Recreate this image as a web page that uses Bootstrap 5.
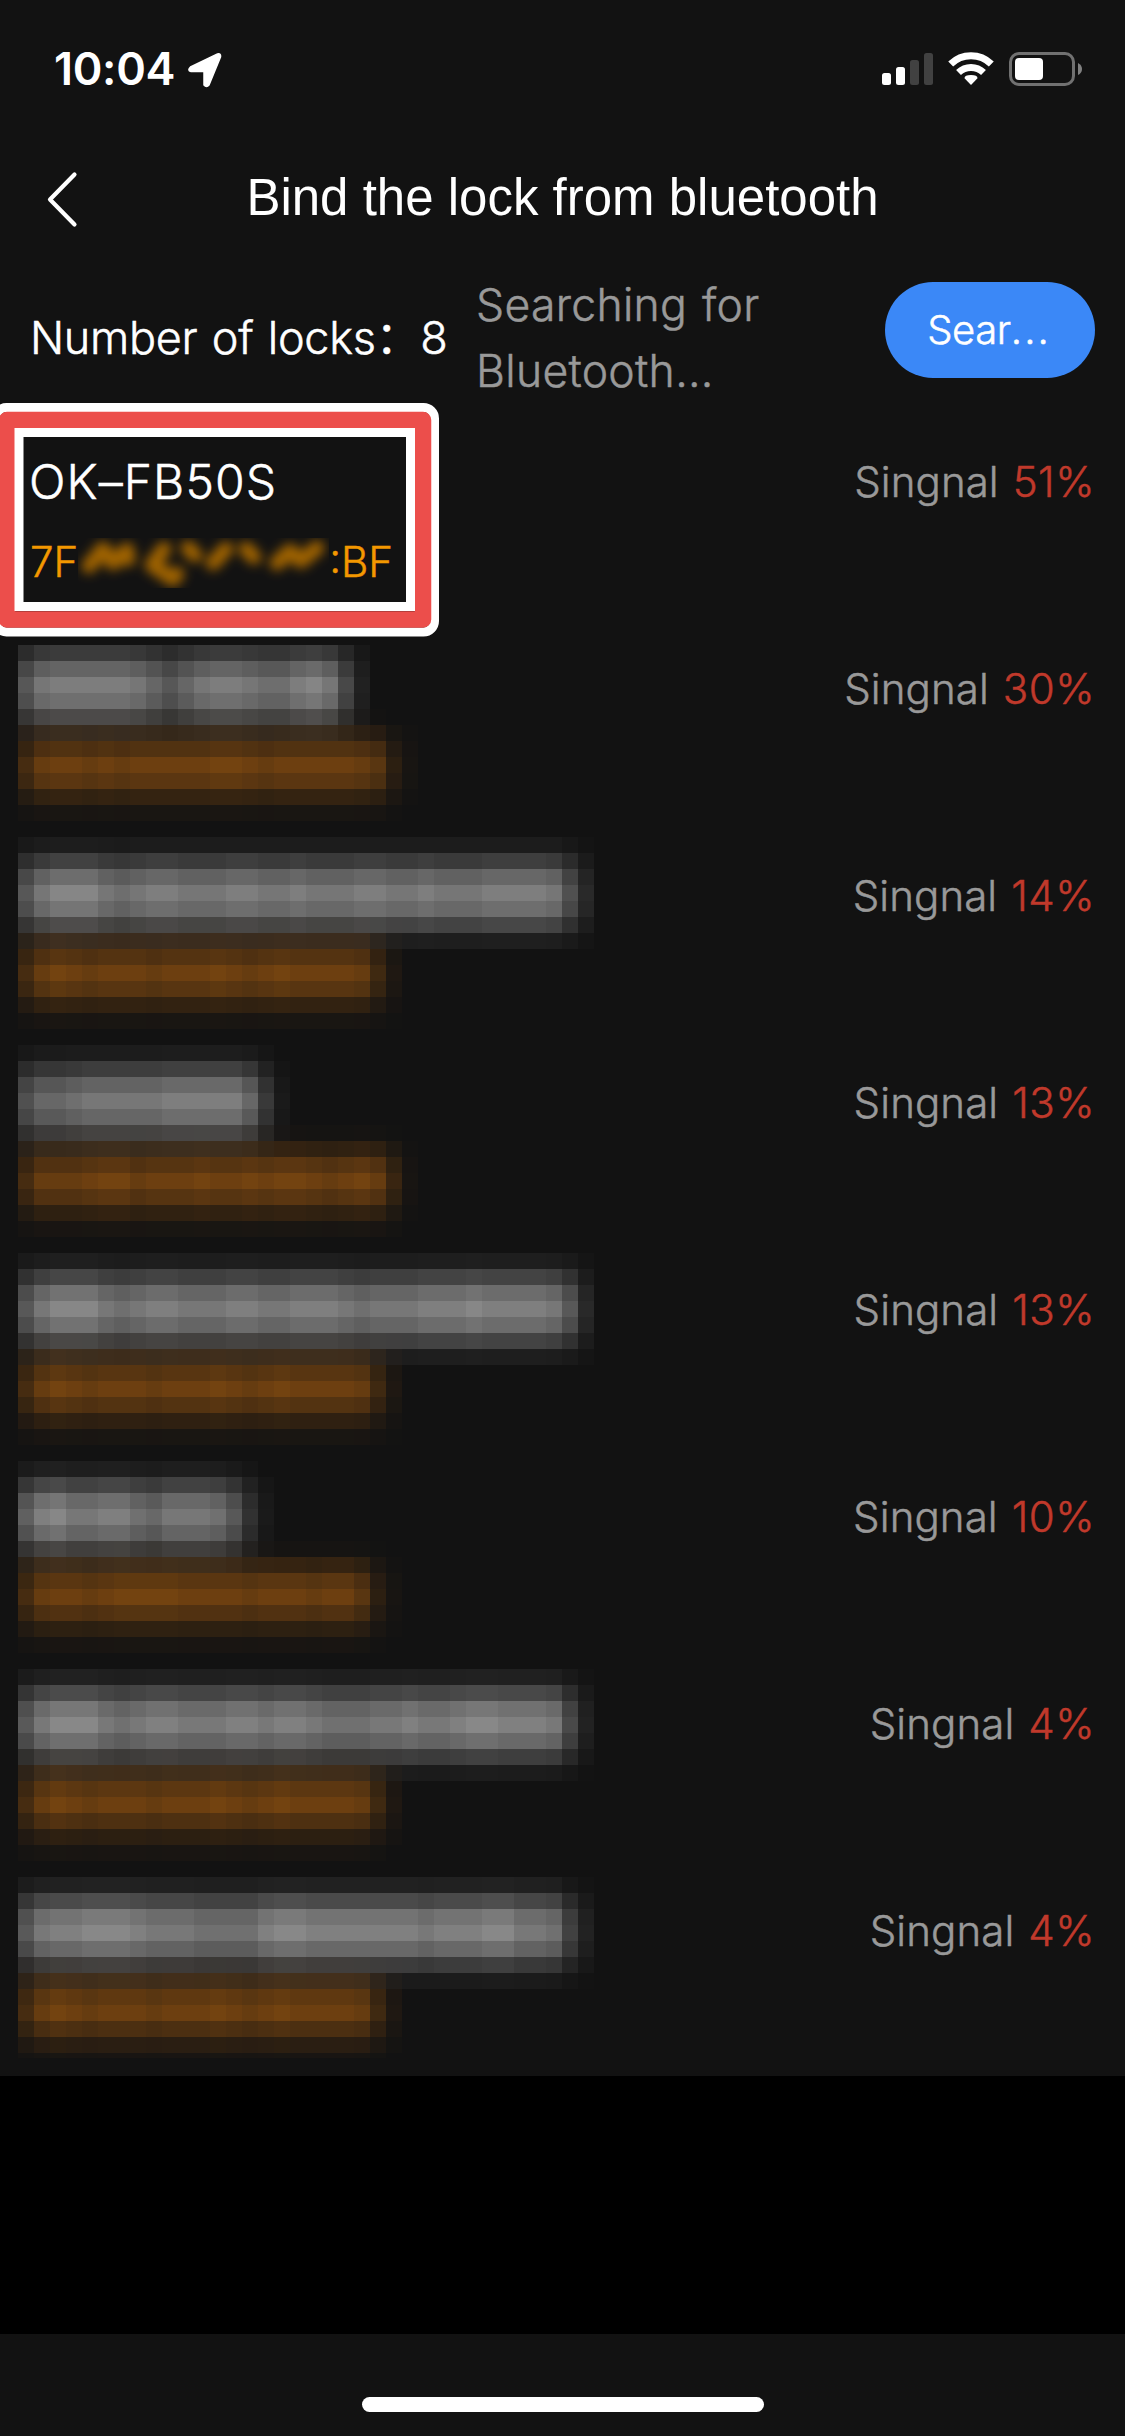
<!DOCTYPE html>
<html lang="en">
<head>
<meta charset="utf-8">
<meta name="viewport" content="width=device-width, initial-scale=1">
<title>Bind the lock from bluetooth</title>
<link href="https://cdn.jsdelivr.net/npm/bootstrap@5.3.0/dist/css/bootstrap.min.css" rel="stylesheet">
<style>
body{background:#121212;color:#fff;font-family:Inter,"Noto Sans CJK SC",sans-serif;font-weight:350;width:1125px;overflow-x:hidden}
.status{height:132px;padding:52px 43px 0 54px}
.clock{font-size:45px;font-weight:600;line-height:34px;letter-spacing:-.3px}
.loc-arrow{margin-left:13px}
.nav-head{height:132px;padding-left:44px}
.nav-title{font:400 51px/132px "Liberation Sans",sans-serif}
.search-row{height:156px;padding:0 30px}
.search-row,.lock-item{-webkit-text-stroke:.5px currentColor}
.lock-count{font-size:45px;line-height:60px;padding-top:44px;width:446px;white-space:nowrap;letter-spacing:-.3px;word-spacing:2px}
.hint{font-size:44.5px;line-height:66px;color:#999;padding-top:8px;width:409px;letter-spacing:.3px;word-spacing:2px}
.search-btn{width:210px;height:96px;border-radius:48px;background:#3b88f7;color:#fff;font-size:40px;font-weight:350;margin-top:18px;padding:0 2px 0 0;line-height:90px;border:0;letter-spacing:-.4px}
.dots{letter-spacing:2px}
.lock-item{height:207px;padding:32px 30px 0}
.lock-name{font-size:48px;line-height:60px;letter-spacing:1.1px;margin-left:-1px}
.lock-mac{font-size:42px;line-height:50px;color:#f39800;margin-top:24px}
.signal-info{font-size:42px;line-height:60px;color:#999;letter-spacing:.1px;word-spacing:2px}
.signal-info b{color:#c0392b;font-weight:350;letter-spacing:.5px}
.marker{left:-9px;top:403px;width:448px;height:233.5px;z-index:3}
.redact{left:18px;top:645px;z-index:2}
.empty-area{height:258px;background:#000}
.home-zone{height:102px;padding-top:63px}
.home-bar{width:402px;height:15px;border-radius:8px;background:#fff}
</style>
</head>
<body>
<div class="position-relative">
<header class="status d-flex justify-content-between align-items-start">
  <div class="d-flex">
    <span class="clock">10:04</span>
    <svg class="loc-arrow" width="34" height="36" viewBox="0 0 34 36"><path d="M2.500 15 29.500 2Q33 1 32.500 5L21 33Q18.500 36 16 33V19.500H3Q-1 18.500 2.500 15Z" fill="#fff" stroke="#fff" stroke-width="1.500" stroke-linejoin="round"/></svg>
  </div>
  <svg width="201" height="36" viewBox="0 0 201 36">
    <g fill="#fff"><rect x="1" y="21" width="9" height="12" rx="2.500"/><rect x="15" y="15" width="9" height="18" rx="2.500"/></g>
    <g fill="#414141"><rect x="29" y="8" width="9" height="25" rx="2.500"/><rect x="43" y="1" width="9" height="32" rx="2.500"/></g>
    <g fill="none" stroke="#fff" stroke-width="7"><path d="M69.700 12A29 29 0 0 1 110.300 12"/><path d="M77.500 20.500A18 18 0 0 1 102.500 20.500"/></g>
    <path d="M90 33 83.500 26.300Q83.500 23 90 23T96.500 26.300Z" fill="#fff"/>
    <rect x="129.500" y="1.500" width="63" height="31" rx="8.500" fill="none" stroke="#717171" stroke-width="3"/>
    <rect x="134" y="6" width="28" height="22" rx="4" fill="#fff"/>
    <path d="M197 11Q201 13 201 17T197 23Z" fill="#818181"/>
  </svg>
</header>
<nav class="nav-head d-flex align-items-center position-relative">
  <svg width="36" height="60" viewBox="0 0 36 60"><path d="M30.500 6.500 6 31.500 30.500 56.500" fill="none" stroke="#fff" stroke-width="4.200" stroke-linecap="round" stroke-linejoin="round"/></svg>
  <div class="position-absolute start-0 w-100 text-center"><span class="nav-title">Bind the lock from bluetooth</span></div>
</nav>
<section class="search-row d-flex">
  <div class="lock-count">Number of locks：8</div>
  <div class="hint">Searching for<br>Bluetooth...</div>
  <button class="search-btn btn" type="button">Sear<span class="dots">...</span></button>
</section>
<main id="locks">
  <article class="lock-item d-flex justify-content-between">
    <div><div class="lock-name">OK–FB50S</div>
      <div class="lock-mac d-flex align-items-center"><span>7F</span>
        <svg width="251" height="52" viewBox="77 533 251 52"><defs><filter id="soft" x="-10%" y="-30%" width="120%" height="160%"><feGaussianBlur stdDeviation="5.500"/></filter></defs>
        <g filter="url(#soft)" fill="none" stroke="#a06305" stroke-width="15" stroke-linecap="round" stroke-linejoin="round"><path d="M88 563 102 546 112 560 126 547 127 556M163 546 151 562 172 576 176 571M187 545 194 552M212 560 225 546M245 546 253 554M276 560 289 548 300 558 316 545"/></g></svg>
        <span>:BF</span></div></div>
    <div class="signal-info">Singnal <b>51%</b></div>
  </article>
</main>
<div class="empty-area"></div>
<footer class="home-zone d-flex justify-content-center"><div class="home-bar"></div></footer>
<svg class="redact position-absolute" id="mosaic" width="608" height="1413" shape-rendering="crispEdges"></svg>
<svg class="marker position-absolute" viewBox="-9 403 448 233.500"><g fill="none"><rect x="-4.500" y="407.500" width="439" height="224.500" rx="11" stroke="#fff" stroke-width="9"/><rect x="7" y="420" width="416" height="199.500" stroke="#ec4e4b" stroke-width="16.500" stroke-linejoin="round"/><rect x="19" y="432.500" width="391.500" height="174" stroke="#fff" stroke-width="9"/></g></svg>
</div>
<script>
// Nearby locks: signal text, brightness of the hidden name and of the hidden address (one hex digit per 16px column)
const macA='8dfedeeedeeefedefeeeed720';
const locks=[
 ['30%','9deeeeedb9bdeedccefd72','8deededeeeeeffedeeeeedb41'],
 ['14%','9dfffdcdeedddeeddedddeeddedddeeeed830',macA],
 ['13%','8bbcdddddeeeeeb51','8dddeffdeeefeefeffedefd61'],
 ['13%','9dfffdcdeedddeeddeeedcdddeeefeeeed930',macA],
 ['10%','aefddeecbdddc941','8deedeffffeeeedeeedeeb41'],
 ['4%','9dfffdcdeedddeedeedcccddeddeffeeed720',macA],
 ['4%','9deefffedddcccceffeeeeeeedeeeffddc620',macA]];
const grayA=[10,44,88,115,100,59,15],grayB=[16,60,104,118,92,45,10];
const warmA=[0,0,0,0,0,3,28,68,97,78,36,8],warmB=[0,0,0,0,0,5,42,82,97,62,26,7];
const list=document.getElementById('locks');
let cells='';
locks.forEach(([sig,name,mac],i)=>{
  list.insertAdjacentHTML('beforeend',`<article class="lock-item d-flex justify-content-end"><div class="signal-info">Singnal <b>${sig}</b></div></article>`);
  const t=i/6;
  for(let r=0;r<12;r++)for(let c=0;c<38;c++){
    const g=((grayA[r]||0)*(1-t)+(grayB[r]||0)*t)*parseInt(name[c]||0,16)/15;
    const w=(warmA[r]*(1-t)+warmB[r]*t)*parseInt(mac[c]||0,16)/15;
    const y=i*208+r*16-16;
    if(y<0||g+w<1)continue;
    cells+=`<rect x="${c*16}" y="${y}" width="16" height="16" fill="rgb(${Math.round(18+g+w)},${Math.round(18+g+w*.5)},${Math.round(18+g-w*.02)})"/>`;
  }
});
document.getElementById('mosaic').innerHTML=cells;
</script>
<script src="https://cdn.jsdelivr.net/npm/bootstrap@5.3.0/dist/js/bootstrap.bundle.min.js"></script>
</body>
</html>
